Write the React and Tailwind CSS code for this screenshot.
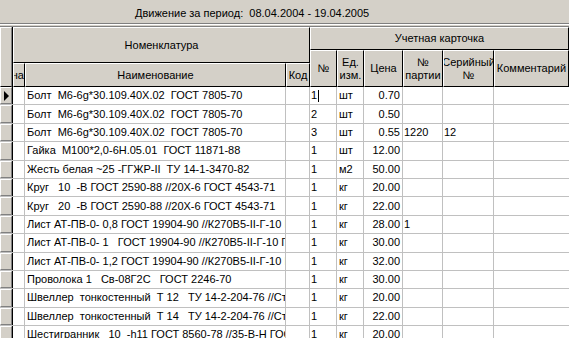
import React from 'react';

const rows = [
  { name: 'Болт  М6-6g*30.109.40Х.02  ГОСТ 7805-70', no: '1', ed: 'шт', price: '0.70', cursor: true },
  { name: 'Болт  М6-6g*30.109.40Х.02  ГОСТ 7805-70', no: '2', ed: 'шт', price: '0.50' },
  { name: 'Болт  М6-6g*30.109.40Х.02  ГОСТ 7805-70', no: '3', ed: 'шт', price: '0.55', party: '1220', serial: '12' },
  { name: 'Гайка  М100*2,0-6Н.05.01  ГОСТ 11871-88', no: '1', ed: 'шт', price: '12.00' },
  { name: 'Жесть белая ~25 -ГГЖР-II  ТУ 14-1-3470-82', no: '1', ed: 'м2', price: '50.00' },
  { name: 'Круг   10  -В ГОСТ 2590-88 //20Х-6 ГОСТ 4543-71', no: '1', ed: 'кг', price: '20.00' },
  { name: 'Круг   20  -В ГОСТ 2590-88 //20Х-6 ГОСТ 4543-71', no: '1', ed: 'кг', price: '22.00' },
  { name: 'Лист АТ-ПВ-0- 0,8 ГОСТ 19904-90 //К270В5-II-Г-10 ГОСТ 16523-89', no: '1', ed: 'кг', price: '28.00', party: '1' },
  { name: 'Лист АТ-ПВ-0- 1   ГОСТ 19904-90 //К270В5-II-Г-10 ГОСТ 16523-89', no: '1', ed: 'кг', price: '30.00' },
  { name: 'Лист АТ-ПВ-0- 1,2 ГОСТ 19904-90 //К270В5-II-Г-10 ГОСТ 16523-89', no: '1', ed: 'кг', price: '32.00' },
  { name: 'Проволока 1   Св-08Г2С   ГОСТ 2246-70', no: '1', ed: 'кг', price: '30.00' },
  { name: 'Швеллер  тонкостенный  Т 12   ТУ 14-2-204-76 //Ст3', no: '1', ed: 'кг', price: '20.00' },
  { name: 'Швеллер  тонкостенный  Т 14   ТУ 14-2-204-76 //Ст3', no: '1', ed: 'кг', price: '22.00' },
  { name: 'Шестигранник   10  -h11 ГОСТ 8560-78 //35-В-Н ГОСТ 1050-88', no: '1', ed: 'кг', price: '20.00' },
];

const hcell =
  'flex items-center justify-center overflow-hidden whitespace-nowrap bg-[#d4d0c8] border border-l-white border-t-white border-r-black border-b-black';

const dcell = 'h-full flex items-center overflow-hidden whitespace-pre border-r border-[#c0c0c0]';

function Indicator({ active }) {
  return (
    <div className="w-[13px] h-full shrink-0 border-r border-black">
      <div className="h-full flex items-center bg-[#d4d0c8] border border-l-white border-t-white border-r-[#808080] border-b-[#808080]">
        {active && (
          <svg width="6" height="10" viewBox="0 0 6 10" className="ml-[3px]">
            <polygon points="0,0 5,5 0,10" fill="black" />
          </svg>
        )}
      </div>
    </div>
  );
}

export default function App() {
  return (
    <div className="w-[569px] h-[338px] overflow-hidden bg-[#d4d0c8] text-[11px] leading-[13px] text-black font-['Liberation_Sans',Arial,sans-serif]">
      {/* period */}
      <div className="h-[24px] border-b border-[#808080] pl-[135px] pt-[7px] whitespace-pre">
        Движение за период:  08.04.2004 - 19.04.2005
      </div>
      <div className="h-[2px] border-t border-white" />

      <div className="border-t border-[#808080]">
        {/* header */}
        <div className="flex h-[60px]">
          <div className="w-[13px] shrink-0 border-r border-black">
            <div className="h-full bg-[#d4d0c8] border border-l-white border-t-white border-r-[#808080] border-b-black" />
          </div>

          <div className="w-[297px] shrink-0 flex flex-col">
            <div className={`${hcell} h-[36px]`}>Номенклатура</div>
            <div className="flex h-[24px]">
              <div className={`${hcell} w-[12px] !justify-end`}>на</div>
              <div className={`${hcell} w-[261px]`}>Наименование</div>
              <div className={`${hcell} w-[24px]`}>Код</div>
            </div>
          </div>

          <div className="flex-1 flex flex-col">
            <div className={`${hcell} h-[23px]`}>Учетная карточка</div>
            <div className="flex h-[37px]">
              <div className={`${hcell} w-[27px]`}>№</div>
              <div className={`${hcell} w-[27px] text-center`}>Ед.<br />изм.</div>
              <div className={`${hcell} w-[39px]`}>Цена</div>
              <div className={`${hcell} w-[40px] flex-col`}>
                <span>№</span>
                <span>партии</span>
              </div>
              <div className={`${hcell} w-[51px] flex-col`}>
                <span>Серийный</span>
                <span>№</span>
              </div>
              <div className={`${hcell} flex-1`}>Комментарий</div>
            </div>
          </div>
        </div>

        {/* data */}
        <div className="bg-white">
          {rows.map((r, i) => (
            <div key={i} className="flex h-[18.4px] border-b border-[#c0c0c0] bg-white">
              <Indicator active={i === 0} />
              <div className={`${dcell} w-[12px]`} />
              <div className={`${dcell} w-[261px] pl-[2px]`}>{r.name}</div>
              <div className={`${dcell} w-[24px]`} />
              <div className={`${dcell} w-[27px] pl-[1px]`}>
                {r.no}
                {r.cursor && <span className="ml-[1px] w-px h-[12px] bg-black" />}
              </div>
              <div className={`${dcell} w-[27px] pl-[2px]`}>{r.ed}</div>
              <div className={`${dcell} w-[39px] justify-end pr-[2px]`}>{r.price}</div>
              <div className={`${dcell} w-[40px] pl-[1px]`}>{r.party}</div>
              <div className={`${dcell} w-[51px] pl-[1px]`}>{r.serial}</div>
              <div className="h-full flex-1" />
            </div>
          ))}
        </div>
      </div>
    </div>
  );
}
